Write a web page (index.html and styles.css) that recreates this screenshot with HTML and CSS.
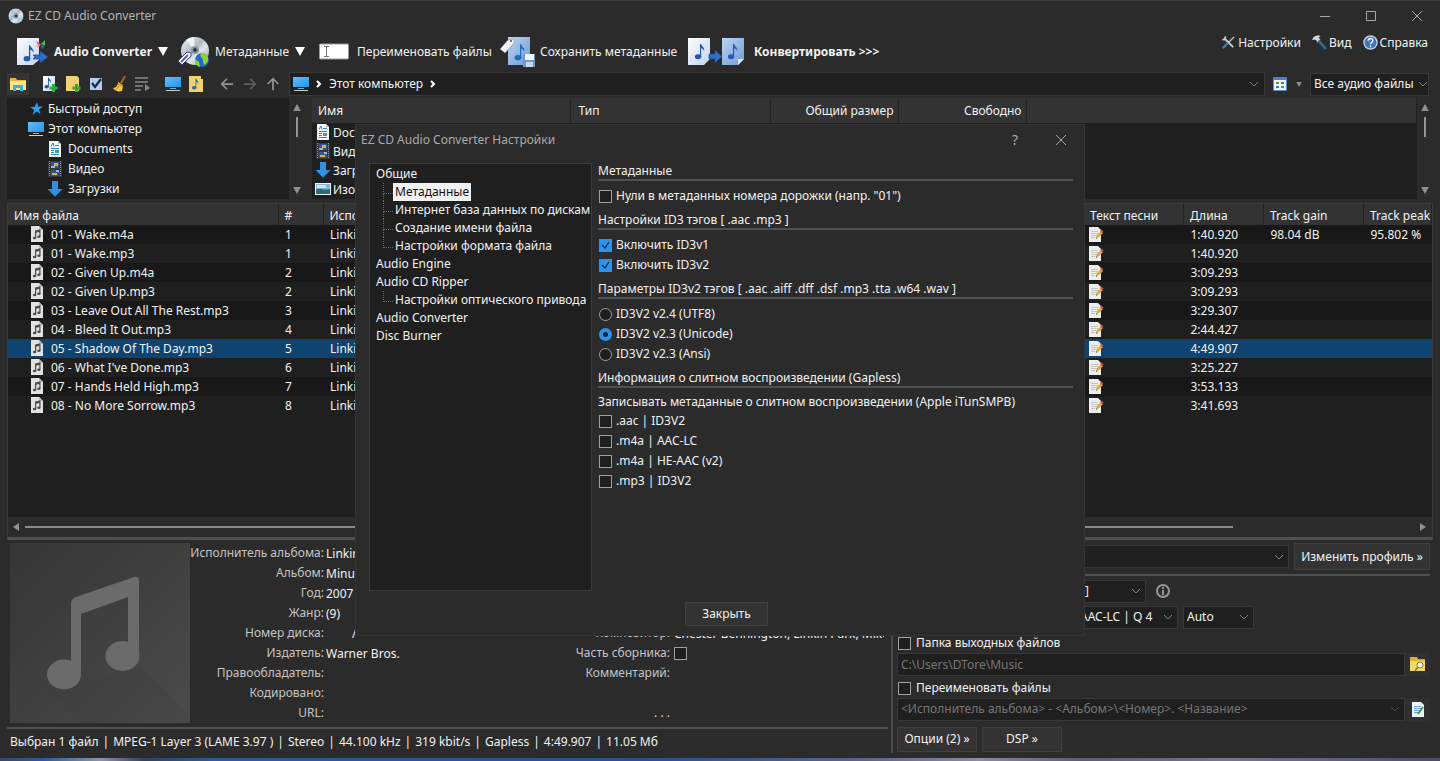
FILE: index.html
```html
<!DOCTYPE html>
<html lang="ru">
<head>
<meta charset="utf-8">
<title>EZ CD Audio Converter</title>
<link rel="stylesheet" href="styles.css">
</head>
<body>
<svg class="defs" aria-hidden="true">
  <defs>
    <linearGradient id="g-paper" x1="0" y1="0" x2="1" y2="1"><stop offset="0" stop-color="#fff"/><stop offset="1" stop-color="#c3d2ea"/></linearGradient>
    <linearGradient id="g-blue" x1="0" y1="0" x2="1" y2="1"><stop offset="0" stop-color="#bcd4f0"/><stop offset="1" stop-color="#6f9ad6"/></linearGradient>
    <linearGradient id="g-disc" x1="0" y1="0" x2="1" y2="1"><stop offset="0" stop-color="#f4f6f8"/><stop offset=".45" stop-color="#aeb8c0"/><stop offset=".6" stop-color="#e2e8ec"/><stop offset="1" stop-color="#8f9aa4"/></linearGradient>
    <linearGradient id="g-screen" x1="0" y1="0" x2="1" y2="1"><stop offset="0" stop-color="#5cc0fa"/><stop offset="1" stop-color="#2695ea"/></linearGradient>
    <linearGradient id="g-cover" x1="0" y1="0" x2="1" y2="1"><stop offset="0" stop-color="#353535"/><stop offset="1" stop-color="#4b4b4b"/></linearGradient>
  </defs>
  <symbol id="note" viewBox="0 0 10 16"><ellipse cx="3.2" cy="13" rx="3" ry="2.3"/><path d="M5 13V1h1.1c.2 2.200 3.700 3 2.700 7-.3-2-1.500-2.700-2.700-3v8z"/></symbol>
  <symbol id="pc" viewBox="0 0 16 16"><path fill="url(#g-screen)" d="M0 1h16v10H0z"/><path fill="#8fa9bb" d="M5 12h6v1H5z"/><path fill="#c4ced6" d="M1 14h14v1H1z"/></symbol>
  <symbol id="doc" viewBox="0 0 16 16"><path fill="#f5f5f5" d="M2 0h9l3 3v13H2z"/><path fill="#b9c0c5" d="M11 0v3h3z"/><path fill="none" stroke="#268fd6" d="M4 5.500 6 2l1 3.500M8 4.500h4M4 7.500h8M4 9.500h3M4 11.500h3M4 13.500h8"/><path fill="#4a9b8a" d="M8 9h4v3H8z"/></symbol>
  <symbol id="video" viewBox="0 0 16 16"><path fill="#34373c" d="M1 0h14v16H1z"/><path stroke="#8f9298" stroke-dasharray="1 1" d="M2.500 0v16M13.500 0v16"/><path fill="#35558f" d="M4 1h8v6H4zM4 9h8v6H4z"/><path fill="#d9b53e" d="M7 2h4v3H7zM5 12h5v2H5z"/><path fill="#9cb6e8" d="M4 5h4v2H4zM9 9h3v2H9z"/></symbol>
  <symbol id="down" viewBox="0 0 16 16"><path fill="#318fe2" d="M5 0h6v8h4.500L8 15.800.5 8H5z"/></symbol>
  <symbol id="image" viewBox="0 0 16 16"><path fill="#f3f3f3" d="M0 2h16v12H0z"/><path fill="#7fb6dd" d="M1 3h14v10H1z"/><path fill="#d4e8f2" d="M2 4h9v3H2z"/><path fill="#2d6a77" d="M1 9c4-3 7 1 14-1v5H1z"/></symbol>
  <symbol id="song" viewBox="0 0 14 16"><path fill="#e2e2e2" d="M1 0h8l4 4v12H1z"/><path fill="#bdbdbd" d="M9 0v4h4z"/><path fill="#4c4c4c" d="M5 4.500l5.500-1.300v7.300H9.300V6L6.200 6.800V12H5z"/><ellipse cx="4.600" cy="12" rx="1.700" ry="1.300" fill="#4c4c4c"/><ellipse cx="8.900" cy="10.700" rx="1.700" ry="1.300" fill="#4c4c4c"/></symbol>
  <symbol id="lyric" viewBox="0 0 16 16"><path fill="#ededed" d="M1 1h9l3 3v12H1z"/><path stroke="#c4c4c4" d="M3 5.500h7M3 7.500h7M3 9.500h6M3 11.500h4"/><path fill="#e4a72f" d="m8 12 1-3 4-4 2 2-4 4z"/><path fill="#d8484a" d="m12 5 1.500-1.500 2 2L14 7z"/><path fill="#555" d="m8 13 .5-2 1 1z"/></symbol>
  <symbol id="caret" viewBox="0 0 10 9"><path fill="currentColor" d="M0 0h10L5 9z"/></symbol>
</svg>

<div class="window">
  <header class="titlebar">
    <svg class="app-icon" viewBox="0 0 16 16"><circle cx="8" cy="8" r="7.500" fill="url(#g-disc)"/><path fill="#a8cce4" d="M8 8 2 3.500A7.500 7.500 0 0 1 6 .8zM8 8l6.500 3.500a7.500 7.500 0 0 1-3 3z"/><circle cx="8" cy="8" r="2.400" fill="#75818c"/><circle cx="8" cy="8" r="1" fill="#222"/></svg>
    <h1 class="title">EZ CD Audio Converter</h1>
    <div class="window-buttons">
      <button aria-label="Свернуть"><svg viewBox="0 0 12 12"><path d="M1 6.500h10"/></svg></button>
      <button aria-label="Развернуть"><svg viewBox="0 0 12 12"><path d="M1.500 1.500h9v9h-9z"/></svg></button>
      <button aria-label="Закрыть окно"><svg viewBox="0 0 12 12"><path d="m1 1 10 10M11 1 1 11"/></svg></button>
    </div>
  </header>

  <nav class="toolbar">
    <button class="tool tool-mode"><svg class="icon32" viewBox="0 0 32 32"><path fill="url(#g-paper)" d="M1 2h22v22l-6 5H1z"/><use href="#note" x="7" y="8" width="12" height="18" fill="#2459a8"/><path fill="#dc4b8c" d="m20 5 5 3-2 3z"/><path fill="#54b948" d="m25 8 4-4v6z"/><path fill="#f2c12e" d="m24 9-3 3-1-3z"/><path fill="#4478dd" d="m25 9 3 2-2 2z"/><path fill="#2f6ec4" stroke="#194a8e" stroke-width=".7" d="M17 19h7v-4l8 6-8 6v-4h-7c2-1 2-3 0-4z"/></svg><b>Audio Converter</b><svg class="caret"><use href="#caret"/></svg></button>
    <button class="tool tool-meta"><svg class="icon32" viewBox="0 0 32 32"><circle cx="18" cy="15" r="14" fill="url(#g-disc)"/><path fill="#eef3f6" d="m18 15-9-11a14 14 0 0 1 8-3z"/><circle cx="18" cy="14" r="4" fill="#8b959e"/><circle cx="18" cy="14" r="1.800" fill="#222"/><path fill="#f8f8ff" stroke="#36407e" d="m1 25 9-9 4 1v3l-9 9z"/><path stroke="#5c62a8" stroke-width="2" d="m4 26 7-7"/><circle cx="25" cy="24" r="7" fill="#2569c9"/><path fill="#8ed32e" d="M24 17c5-1 8 4 7 8l-3 4c-3-2-1-5-3-7s-2-3-1-5zM18 23l4 3 1 5c-4-1-5-4-5-8z"/></svg><span>Метаданные</span><svg class="caret"><use href="#caret"/></svg></button>
    <button class="tool tool-rename"><svg class="icon-rename" viewBox="0 0 30 17"><rect x=".5" y="1" width="29" height="15" rx="1" fill="#fff" stroke="#999"/><path stroke="#777" fill="none" d="M5 3.500h5M7.500 3.500v10M5 13.500h5"/></svg><span>Переименовать файлы</span></button>
    <button class="tool tool-save"><svg class="icon-save" viewBox="0 0 36 32"><path fill="url(#g-blue)" d="M8 1h22v28H8z"/><use href="#note" x="14" y="7" width="12" height="18" fill="#1b6fb4"/><path fill="#f4f4fa" stroke="#777d99" stroke-width=".5" d="m0 13 8-9 6-1v4l-9 10z"/><circle cx="11" cy="5" r="1" fill="#555"/><path fill="#7796c0" d="M23 18h12v13H23z"/><path fill="#f2f5f9" d="M25 18h9v6h-9z"/><path fill="#cbd7e6" d="M26 26h7v5h-7z"/></svg><span>Сохранить метаданные</span></button>
    <button class="tool tool-convert"><svg class="icon-convert" viewBox="0 0 58 32"><path fill="url(#g-paper)" d="M1 2h22v21l-6 6H1z"/><path fill="url(#g-blue)" d="M35 2h22v21l-6 6H35z"/><path fill="#dce7f6" d="M51 29v-6h6z"/><use href="#note" x="7" y="7" width="12" height="17" fill="#2459a8"/><use href="#note" x="40" y="7" width="12" height="17" fill="#245cb2"/><path fill="#2f6ec4" stroke="#194a8e" stroke-width=".6" d="M22 18h6v-4l7 6.500-7 6.500v-4h-6z"/></svg><b>Конвертировать &gt;&gt;&gt;</b></button>
    <div class="toolbar-right">
      <button class="mini"><svg viewBox="0 0 16 16"><path fill="none" stroke="#c9ced2" stroke-width="2" d="m4 4 9 9M1.500 4.500c2 1 3.500 0 3-3"/><path stroke="#bfc4c8" stroke-width="1.500" d="m14 2-6 6"/><path stroke="#2f80b8" stroke-width="2.500" d="m2 14 5-5"/></svg>Настройки</button>
      <button class="mini"><svg viewBox="0 0 16 16"><path fill="#d7dadc" d="M0 5C2 1 5 0 9 1L7 3l2 2-3 3-2-3z"/><path stroke="#2e6a91" stroke-width="3" d="m7 6 8 9"/></svg>Вид</button>
      <button class="mini"><svg viewBox="0 0 16 16"><circle cx="8" cy="8" r="7" fill="#3f72c0" stroke="#b9cee9" stroke-width="1.500"/><path fill="none" stroke="#fff" stroke-width="1.500" d="M5.500 6.200C5.500 3 10.500 3 10.500 6c0 1.700-2.500 1.700-2.500 3.700M8 11v2"/></svg>Справка</button>
    </div>
  </nav>

  <div class="addressbar">
    <div class="quick-tools">
      <button class="is-active" aria-label="Папки"><svg viewBox="0 0 16 16"><path fill="#e8b83c" d="M0 2h6l1 2h9v10H0z"/><path fill="#ffe28a" d="M0 5h16v9H0z"/><path fill="#34b6e8" d="M3 15V9h10v6h-3v-3H6v3z"/></svg></button>
      <button aria-label="Добавить файлы"><svg viewBox="0 0 16 16"><path fill="url(#g-paper)" d="M1 0h12v15H1z"/><use href="#note" x="2" y="1" width="8" height="12" fill="#205795"/><path stroke="#22b43c" stroke-width="3" d="M11.500 8v8M7.500 12h8"/></svg></button>
      <button aria-label="Добавить папку"><svg viewBox="0 0 16 16"><path fill="#f1d273" d="M1 0h11l2 2v13H1z"/><path stroke="#38a82f" stroke-width="3" d="M11.500 8v8M7.500 12h8"/></svg></button>
      <button aria-label="Отметить"><svg viewBox="0 0 16 16"><path fill="#b5cceb" d="M2 2h12v12H2z"/><path fill="none" stroke="#102a4c" stroke-width="2.200" d="m4 7 3 4 6-8"/></svg></button>
      <button aria-label="Очистить"><svg viewBox="0 0 16 16"><path stroke="#9a6b32" stroke-width="2" d="m14 0-4 7"/><path fill="#f6c83c" d="M7 6l5 3-1 6c-4 1-7 0-9-3 3 0 5-3 5-6z"/><path fill="none" stroke="#b67f20" d="m7 8 5 2M5 14l3-4"/></svg></button>
      <button aria-label="Список"><svg viewBox="0 0 16 16"><path stroke="#8a8a8a" stroke-width="1.500" d="M1 2h13M1 6h13M1 10h8M1 14h6"/><path fill="#8a8a8a" d="m11 8 5 4-5 3z"/></svg></button>
      <button class="gap-before" aria-label="Компьютер"><svg viewBox="0 0 16 16"><use href="#pc" width="16" height="16"/></svg></button>
      <button aria-label="Музыка"><svg viewBox="0 0 16 16"><path fill="#f6d26b" d="M1 0h12v3h2v13H1z"/><use href="#note" x="3" y="2" width="9" height="12" fill="#1f6ab4"/></svg></button>
      <button class="gap-before" aria-label="Назад"><svg class="arrow" viewBox="0 0 16 16"><path d="M15 8H2m6-6L2 8l6 6"/></svg></button>
      <button aria-label="Вперёд"><svg class="arrow dim" viewBox="0 0 16 16"><path d="M1 8h13M8 2l6 6-6 6"/></svg></button>
      <button aria-label="Вверх"><svg class="arrow" viewBox="0 0 16 16"><path d="M8 15V2M2 8l6-6 6 6"/></svg></button>
    </div>
    <div class="path">
      <svg class="icon16"><use href="#pc"/></svg>
      <svg class="sep" viewBox="0 0 6 8"><path d="m1 1 3 3-3 3"/></svg>
      <a href="#pc-root">Этот компьютер</a>
      <svg class="sep" viewBox="0 0 6 8"><path d="m1 1 3 3-3 3"/></svg>
      <svg class="chev" viewBox="0 0 10 6"><path d="m1 1 4 4 4-4"/></svg>
    </div>
    <button class="view-button" aria-label="Вид списка"><svg class="icon-view" viewBox="0 0 14 14"><path fill="#edf3f8" stroke="#5c8fd1" d="M.5.500h13v13H.5z"/><path fill="#4a83d0" d="M0 0h14v3H0z"/><path fill="#5a9e3e" d="M3 5h3v2H3zM8 9h3v2H8z"/><path fill="#4a79a8" d="M8 5h3v2H8zM3 9h3v2H3z"/></svg><svg class="small-caret"><use href="#caret"/></svg></button>
    <select class="box filter" aria-label="Фильтр файлов"><option>Все аудио файлы</option></select>
  </div>

  <section class="browser">
    <ul class="folders">
      <li><svg class="icon16" viewBox="0 0 16 16"><path fill="#2a9df0" d="m9 1 1.200 4.500H15l-4 3L12.500 13 8.500 10.500 4.500 14l1.700-5L2 6h4.500z"/></svg>Быстрый доступ</li>
      <li><svg class="icon16"><use href="#pc"/></svg>Этот компьютер</li>
      <li class="nested"><svg class="icon16"><use href="#doc"/></svg>Documents</li>
      <li class="nested"><svg class="icon16"><use href="#video"/></svg>Видео</li>
      <li class="nested"><svg class="icon16"><use href="#down"/></svg>Загрузки</li>
    </ul>
    <div class="vscroll"><svg class="tri"><use href="#caret" class="flip"/></svg><i></i><svg class="tri"><use href="#caret"/></svg></div>
    <div class="listing">
      <table class="places">
        <colgroup><col class="w-name"><col class="w-type"><col class="w-size"><col class="w-free"><col></colgroup>
        <thead><tr><th>Имя</th><th>Тип</th><th class="num">Общий размер</th><th class="num">Свободно</th><th></th></tr></thead>
        <tbody>
          <tr><td colspan="5"><svg class="icon16"><use href="#doc"/></svg>Documents</td></tr>
          <tr><td colspan="5"><svg class="icon16"><use href="#video"/></svg>Видео</td></tr>
          <tr><td colspan="5"><svg class="icon16"><use href="#down"/></svg>Загрузки</td></tr>
          <tr><td colspan="5"><svg class="icon16"><use href="#image"/></svg>Изображения</td></tr>
        </tbody>
      </table>
    </div>
    <div class="vscroll"><svg class="tri"><use href="#caret" class="flip"/></svg><i></i><svg class="tri"><use href="#caret"/></svg></div>
  </section>

  <section class="tracks-panel">
    <table class="tracks">
      <colgroup><col class="c-file"><col class="c-no"><col><col class="c-lyric"><col class="c-len"><col class="c-gain"><col class="c-peak"></colgroup>
      <thead><tr><th>Имя файла</th><th>#</th><th>Исполнитель</th><th>Текст песни</th><th>Длина</th><th>Track gain</th><th>Track peak</th></tr></thead>
      <tbody>
        <tr><td><svg class="song"><use href="#song"/></svg>01 - Wake.m4a</td><td>1</td><td>Linkin Park</td><td><svg class="icon16"><use href="#lyric"/></svg></td><td>1:40.920</td><td>98.04 dB</td><td>95.802 %</td></tr>
        <tr><td><svg class="song"><use href="#song"/></svg>01 - Wake.mp3</td><td>1</td><td>Linkin Park</td><td><svg class="icon16"><use href="#lyric"/></svg></td><td>1:40.920</td><td></td><td></td></tr>
        <tr><td><svg class="song"><use href="#song"/></svg>02 - Given Up.m4a</td><td>2</td><td>Linkin Park</td><td><svg class="icon16"><use href="#lyric"/></svg></td><td>3:09.293</td><td></td><td></td></tr>
        <tr><td><svg class="song"><use href="#song"/></svg>02 - Given Up.mp3</td><td>2</td><td>Linkin Park</td><td><svg class="icon16"><use href="#lyric"/></svg></td><td>3:09.293</td><td></td><td></td></tr>
        <tr><td><svg class="song"><use href="#song"/></svg>03 - Leave Out All The Rest.mp3</td><td>3</td><td>Linkin Park</td><td><svg class="icon16"><use href="#lyric"/></svg></td><td>3:29.307</td><td></td><td></td></tr>
        <tr><td><svg class="song"><use href="#song"/></svg>04 - Bleed It Out.mp3</td><td>4</td><td>Linkin Park</td><td><svg class="icon16"><use href="#lyric"/></svg></td><td>2:44.427</td><td></td><td></td></tr>
        <tr class="selected"><td><svg class="song"><use href="#song"/></svg>05 - Shadow Of The Day.mp3</td><td>5</td><td>Linkin Park</td><td><svg class="icon16"><use href="#lyric"/></svg></td><td>4:49.907</td><td></td><td></td></tr>
        <tr><td><svg class="song"><use href="#song"/></svg>06 - What I've Done.mp3</td><td>6</td><td>Linkin Park</td><td><svg class="icon16"><use href="#lyric"/></svg></td><td>3:25.227</td><td></td><td></td></tr>
        <tr><td><svg class="song"><use href="#song"/></svg>07 - Hands Held High.mp3</td><td>7</td><td>Linkin Park</td><td><svg class="icon16"><use href="#lyric"/></svg></td><td>3:53.133</td><td></td><td></td></tr>
        <tr><td><svg class="song"><use href="#song"/></svg>08 - No More Sorrow.mp3</td><td>8</td><td>Linkin Park</td><td><svg class="icon16"><use href="#lyric"/></svg></td><td>3:41.693</td><td></td><td></td></tr>
      </tbody>
    </table>
    <div class="hscroll"><svg viewBox="0 0 6 8"><path d="M6 0v8L0 4z"/></svg><div class="rail"><i></i></div><svg viewBox="0 0 6 8"><path d="M0 0v8l6-4z"/></svg></div>
  </section>

  <section class="bottom">
    <div class="info">
      <div class="meta">
        <svg class="cover" viewBox="0 0 180 180"><path fill="url(#g-cover)" d="M0 0h180v180H0z"/><path fill="#2f2f2f" opacity=".1" d="m132 125 48 48v7H70l-32-32z"/><path fill="#6b6b6b" d="M61 60c0-3 2-5 5-6l58-20c3-1 5 0 5 3v77H118V54L71 71v62H61z"/><ellipse cx="54" cy="131.500" rx="17" ry="15" fill="#6b6b6b"/><ellipse cx="112.500" cy="113" rx="17" ry="15" fill="#6b6b6b"/></svg>
        <div class="fields">
          <label for="f-artist">Исполнитель альбома:</label><input id="f-artist" value="Linkin Park">
          <label for="f-album">Альбом:</label><input id="f-album" value="Minutes to Midnight">
          <label for="f-year">Год:</label><input id="f-year" value="2007">
          <label for="f-genre">Жанр:</label><input id="f-genre" value="(9)">
          <label for="f-disc">Номер диска:</label><input id="f-disc" value="/">
          <label for="f-label">Издатель:</label><input id="f-label" value="Warner Bros.">
          <label for="f-copy">Правообладатель:</label><input id="f-copy">
          <label for="f-enc">Кодировано:</label><input id="f-enc">
          <label for="f-url">URL:</label><input id="f-url">
        </div>
        <div class="fields fields-more">
          <label for="f-comp">Композитор:</label><input id="f-comp" value="Chester Bennington, Linkin Park, Mike Shinoda">
          <label for="f-part">Часть сборника:</label><input id="f-part" type="checkbox">
          <label for="f-note">Комментарий:</label><input id="f-note">
          <span></span><span></span>
          <button class="more">. . .</button>
        </div>
      </div>
      <footer class="status"><span>Выбран 1 файл</span><span>MPEG-1 Layer 3 (LAME 3.97 )</span><span>Stereo</span><span>44.100 kHz</span><span>319 kbit/s</span><span>Gapless</span><span>4:49.907</span><span>11.05 Мб</span></footer>
    </div>

    <form class="output">
      <div class="line profile"><select class="box grow" aria-label="Профиль"><option></option></select><button type="button" class="btn">Изменить профиль »</button></div>
      <div class="line"><select class="box format" aria-label="Формат"><option>]</option></select><svg class="info-icon" viewBox="0 0 14 14"><circle cx="7" cy="7" r="6"/><path d="M7 3v2M7 6v5"/></svg></div>
      <div class="line quality"><select class="box codec" aria-label="Кодек"><option>AAC-LC | Q 4</option></select><select class="box auto" aria-label="Каналы"><option>Auto</option></select></div>
      <label class="check"><input type="checkbox">Папка выходных файлов</label>
      <div class="line"><input class="box grow muted" aria-label="Папка" value="C:\Users\DTore\Music"><button type="button" class="side" aria-label="Обзор"><svg viewBox="0 0 16 16"><path fill="#e2b02f" d="M0 1h7l1 2h7v12H0z"/><path fill="#f5d669" d="M0 5h15v10H0z"/><circle cx="10" cy="9" r="3" fill="#f7f3dc" stroke="#8a7a4a"/><path stroke="#8a7a4a" stroke-width="1.500" d="m8 11-3 4"/></svg></button></div>
      <label class="check"><input type="checkbox">Переименовать файлы</label>
      <div class="line"><select class="box grow muted dim-chev" aria-label="Шаблон имени"><option>&lt;Исполнитель альбома&gt; - &lt;Альбом&gt;\&lt;Номер&gt;. &lt;Название&gt;</option></select><button type="button" class="side" aria-label="Изменить шаблон"><svg viewBox="0 0 16 16"><path fill="#eef5fc" d="M2 1h9l3 3v12H2z"/><path stroke="#6aa0d6" d="M4 5.500h7M4 7.500h7M4 9.500h6M4 11.500h4"/><path stroke="#4a9c35" stroke-width="2" d="m8 13 5-7"/></svg></button></div>
      <div class="line actions"><button type="button" class="btn">Опции (2) »</button><button type="button" class="btn">DSP »</button></div>
    </form>
  </section>
  <div class="desktop-edge"></div>

  <div class="dialog" role="dialog" aria-labelledby="dlg-title">
    <header class="dialog-head"><h2 id="dlg-title">EZ CD Audio Converter Настройки</h2><button aria-label="Помощь">?</button><button aria-label="Закрыть настройки"><svg viewBox="0 0 12 12"><path d="m1 1 10 10M11 1 1 11"/></svg></button></header>
    <div class="dialog-body">
      <ul class="tree">
        <li>Общие
          <ul><li><span class="current">Метаданные</span></li><li><span>Интернет база данных по дискам</span></li><li><span>Создание имени файла</span></li><li><span>Настройки формата файла</span></li></ul>
        </li>
        <li>Audio Engine</li>
        <li>Audio CD Ripper
          <ul><li><span>Настройки оптического привода</span></li></ul>
        </li>
        <li>Audio Converter</li>
        <li>Disc Burner</li>
      </ul>
      <div class="options">
        <h3>Метаданные</h3>
        <label class="check"><input type="checkbox">Нули в метаданных номера дорожки (напр. "01")</label>
        <h3>Настройки ID3 тэгов [ .aac .mp3 ]</h3>
        <label class="check"><input type="checkbox" checked>Включить ID3v1</label>
        <label class="check"><input type="checkbox" checked>Включить ID3v2</label>
        <h3>Параметры ID3v2 тэгов [ .aac .aiff .dff .dsf .mp3 .tta .w64 .wav ]</h3>
        <label class="check"><input type="radio" name="id3">ID3V2 v2.4 (UTF8)</label>
        <label class="check"><input type="radio" name="id3" checked>ID3V2 v2.3 (Unicode)</label>
        <label class="check"><input type="radio" name="id3">ID3V2 v2.3 (Ansi)</label>
        <h3>Информация о слитном воспроизведении (Gapless)</h3>
        <p>Записывать метаданные о слитном воспроизведении (Apple iTunSMPB)</p>
        <label class="check"><input type="checkbox">.aac | ID3V2</label>
        <label class="check"><input type="checkbox">.m4a | AAC-LC</label>
        <label class="check"><input type="checkbox">.m4a | HE-AAC (v2)</label>
        <label class="check"><input type="checkbox">.mp3 | ID3V2</label>
      </div>
    </div>
    <div class="dialog-foot"><button class="btn">Закрыть</button></div>
  </div>
</div>
</body>
</html>
```
FILE: styles.css
```css
* { box-sizing: border-box; }
body {
  margin: 0;
  background: #2b2b2b;
  color: #f2f2f2;
  font: 12px/18px "Noto Sans", "Open Sans", sans-serif;
}
button, input, select { font: inherit; color: inherit; margin: 0; }
button { border: 0; padding: 0; background: none; }
ul { list-style: none; margin: 0; padding: 0; }
h1, h2, h3, p { margin: 0; font: inherit; }
svg { flex: none; display: block; }
table { border-collapse: collapse; table-layout: fixed; width: 100%; }
th, td { padding: 0; font-weight: normal; text-align: left; white-space: nowrap; overflow: hidden; }
.defs { position: absolute; width: 0; height: 0; }
.icon16 { width: 16px; height: 16px; }

.window {
  position: relative;
  display: flex;
  flex-direction: column;
  min-height: 100vh;
  border-top: 1px solid #3d3d3d;
}

/* Title bar */
.titlebar { display: flex; align-items: center; height: 30px; padding-left: 8px; gap: 4px; }
.app-icon { width: 16px; height: 16px; }
.title { color: #b4b4b4; flex: 1; }
.window-buttons { display: flex; }
.window-buttons button { width: 46px; height: 30px; display: grid; place-items: center; }
.window-buttons svg, .dialog-head svg { width: 12px; height: 12px; fill: none; stroke: #a8a8a8; }

/* Main toolbar */
.toolbar { display: flex; height: 41px; padding: 0 12px 0 16px; }
.tool { display: flex; align-items: center; gap: 6px; white-space: nowrap; flex: none; }
.tool-mode { width: 161px; }
.tool-meta { width: 142px; }
.tool-rename { width: 181px; gap: 8px; }
.tool-save { width: 187px; gap: 4px; }
.tool-convert { gap: 9px; }
.icon32 { width: 32px; height: 32px; }
.icon-rename { width: 30px; height: 17px; }
.icon-save { width: 36px; height: 32px; }
.icon-convert { width: 58px; height: 32px; }
.caret { width: 10px; height: 9px; color: #fff; }
.toolbar-right { display: flex; gap: 11px; margin-left: auto; align-items: flex-start; }
.mini { display: flex; align-items: center; gap: 2px; height: 23px; }
.mini svg { width: 15px; height: 15px; }

/* Address row */
.addressbar { display: flex; align-items: center; height: 24px; padding: 0 11px 0 7px; }
.quick-tools { display: flex; gap: 1px; width: 282px; flex: none; }
.quick-tools button { width: 22px; height: 22px; display: grid; place-items: center; }
.quick-tools .is-active { background: #353535; margin-right: 9px; }
.quick-tools .gap-before { margin-left: 8px; }
.quick-tools svg { width: 16px; height: 16px; }
.quick-tools .arrow { width: 14px; height: 14px; fill: none; stroke: #929292; stroke-width: 2; }
.quick-tools .dim { stroke: #5e5e5e; }
.path {
  flex: 1;
  display: flex;
  align-items: center;
  gap: 7px;
  height: 24px;
  padding: 0 5px 0 3px;
  background: #1f1f1f;
  border: 1px solid #383838;
}
.path a { color: inherit; text-decoration: none; }
.sep { width: 6px; height: 8px; fill: none; stroke: #fff; stroke-width: 2; }
.chev { width: 10px; height: 6px; fill: none; stroke: #828282; margin-left: auto; }
.view-button { display: flex; align-items: center; gap: 9px; padding: 0 8px 0 8px; }
.icon-view { width: 14px; height: 14px; }
.small-caret { width: 6px; height: 5px; color: #8c8c8c; }
.filter { width: 119px; }

.box {
  height: 23px;
  padding: 0 3px;
  background: #1f1f1f;
  border: 1px solid #383838;
  border-radius: 0;
  min-width: 0;
}
select.box {
  appearance: none;
  background: #1f1f1f url("data:image/svg+xml,%3Csvg xmlns='http://www.w3.org/2000/svg' width='10' height='6'%3E%3Cpath d='m1 1 4 4 4-4' fill='none' stroke='%23828282'/%3E%3C/svg%3E") no-repeat right 4px center;
}
select.filter { background-position-x: right; }
select.dim-chev {
  background-image: url("data:image/svg+xml,%3Csvg xmlns='http://www.w3.org/2000/svg' width='10' height='6'%3E%3Cpath d='m1 1 4 4 4-4' fill='none' stroke='%23484848'/%3E%3C/svg%3E");
}
.grow { flex: 1; }
.muted { color: #767676; }

/* Folder browser */
.browser { display: flex; height: 101px; margin: 2px 7px 0; }
.folders { width: 282px; flex: none; background: #1f1f1f; padding: 1px 0 0 21px; }
.folders li { display: flex; align-items: center; gap: 4px; height: 20px; }
.folders .nested { padding-left: 19px; gap: 5px; }
.vscroll { width: 16px; flex: none; display: flex; flex-direction: column; align-items: center; padding: 6px 0 5px; }
.vscroll i { width: 2px; height: 20px; background: #969696; margin: 6px 0 auto; }
.tri { width: 8px; height: 7px; color: #909090; }
.flip { transform: rotate(180deg); transform-origin: center; }
.listing { flex: 1; min-width: 0; overflow: hidden; background: #1f1f1f; margin-left: 7px; }
.w-name { width: 258px; }
.w-type { width: 200px; }
.w-size, .w-free { width: 128px; }
.places th { height: 25px; padding: 0 6px; background: #333; border-right: 1px solid #232323; }
.places th + th { padding-left: 8px; }
.places th.num { text-align: right; padding-right: 4px; }
.places td { height: 19px; padding-left: 3px; line-height: 19px; }
.places td svg, .tracks td svg { display: inline-block; vertical-align: top; margin-top: 1px; }
.places td svg { margin-right: 2px; }

/* Tracks */
.tracks-panel {
  flex: 1;
  display: flex;
  flex-direction: column;
  margin: 4px 7px 0;
  background: #1f1f1f;
  border: 1px solid #3c3c3c;
  border-bottom: 3px solid #505050;
}
.c-file { width: 270px; }
.c-no { width: 45px; }
.c-lyric { width: 100px; }
.c-len { width: 80px; }
.c-gain { width: 100px; }
.c-peak { width: 68px; }
.tracks th { height: 21px; padding: 2px 0 0 6px; background: #333; border-right: 1px solid #232323; }
.tracks td { height: 19px; line-height: 19px; padding-left: 7px; }
.tracks td:first-child { padding-left: 22px; }
.tracks td:nth-child(4) { padding-left: 4px; }
.tracks tbody tr:nth-child(odd) { background: #181818; }
.tracks tbody tr.selected { background: #0f4471; }
.song { width: 14px; height: 16px; margin-right: 7px; }
.hscroll { display: flex; align-items: center; gap: 6px; height: 20px; margin-top: auto; padding: 0 6px 0 5px; background: #2b2b2b; }
.hscroll svg { width: 6px; height: 8px; fill: #929292; }
.rail { flex: 1; }
.rail i { display: block; width: 87%; height: 2px; background: #8a8a8a; }

/* Bottom area */
.bottom { display: flex; height: 218px; margin: 0 10px 0 7px; gap: 4px; }
.info { flex: 1; min-width: 0; display: flex; flex-direction: column; border-right: 2px solid #4a4a4a; margin-bottom: 5px; }
.meta { display: flex; flex: 1; padding: 3px 4px 0 3px; border-bottom: 2px solid #505050; margin-right: 3px; }
.cover { width: 180px; height: 180px; }
.fields {
  display: grid;
  grid-template-columns: 134px 205px;
  grid-auto-rows: 20px;
  column-gap: 2px;
  flex: none;
}
.fields label { color: #c4c4c4; text-align: right; line-height: 20px; white-space: nowrap; }
.fields input:not([type="checkbox"]) { border: 0; background: none; padding: 0; height: 20px; min-width: 0; width: 100%; }
.fields input#f-disc { padding-left: 26px; }
.fields-more { grid-template-columns: 139px 1fr; column-gap: 4px; flex: 1; min-width: 0; padding-top: 80px; }
.fields-more [type="checkbox"] { align-self: center; }
.more { text-align: right; color: #ddd; }
.status { display: flex; height: 24px; align-items: center; padding: 1px 0 0 3px; white-space: nowrap; }
.status span + span::before { content: "|"; padding: 0 4px; }

.output { width: 533px; flex: none; padding-top: 3px; display: flex; flex-direction: column; }
.line { display: flex; align-items: center; gap: 5px; height: 26px; }
.profile { height: 33px; padding-bottom: 4px; border-bottom: 2px solid #505050; margin-bottom: 2px; }
.profile .btn { width: 136px; height: 27px; }
.format { width: 249px; padding-left: 187px; }
.quality { margin-bottom: 3px; }
.codec { width: 281px; padding-left: 182px; }
.auto { width: 71px; }
.info-icon { width: 14px; height: 14px; margin-left: 5px; fill: none; stroke: #969696; stroke-width: 2; }
.output > .check { height: 18px; padding-left: 1px; margin-top: 1px; }
.output > .check + .line { padding-bottom: 2px; }
.side { width: 25px; height: 23px; display: grid; place-items: center; background: #303030; margin-left: -5px; }
.side svg { width: 16px; height: 16px; }
.btn { background: #333; border: 1px solid #404040; height: 25px; white-space: nowrap; }
.actions { margin-top: 3px; }
.actions .btn { width: 80px; }

.check { display: flex; align-items: center; gap: 5px; height: 20px; white-space: nowrap; }
input[type="checkbox"], input[type="radio"] {
  appearance: none;
  width: 13px;
  height: 13px;
  flex: none;
  background: #1f1f1f;
  border: 1px solid #a0a0a0;
}
input[type="radio"] { border-radius: 50%; }
input[type="radio"]:checked { border: 4px solid #2a93ee; }
input[type="checkbox"]:checked {
  border-color: #2a93ee;
  background: #2a93ee url("data:image/svg+xml,%3Csvg xmlns='http://www.w3.org/2000/svg' width='11' height='11'%3E%3Cpath d='m2 5 3 3 4-6' fill='none' stroke='%23102a44' stroke-width='1.300'/%3E%3C/svg%3E") center no-repeat;
}

.desktop-edge {
  height: 3px;
  margin-top: auto;
  background: linear-gradient(90deg, #3d4560, #2e5b96 3%, #8d93a8 7%, #35405c 10%, #2e5b96 15%, #2c4f8c 45%, #5f6285 60%, #8c8a9c 68%, #5c5b70 75%, #777489 85%, #4b4c66);
}

/* Settings dialog */
.dialog {
  position: absolute;
  inset: 0 0 2px;
  margin: auto;
  width: 730px;
  height: 512px;
  display: flex;
  flex-direction: column;
  background: #2b2b2b;
  border: 1px solid #343434;
}
.dialog-head { display: flex; align-items: center; height: 30px; padding-left: 5px; color: #aaa; }
.dialog-head h2 { flex: 1; }
.dialog-head button { width: 46px; height: 30px; display: grid; place-items: center; font-size: 14px; }
.dialog-body { display: flex; gap: 6px; flex: 1; padding: 8px 11px 0 13px; }
.tree { width: 223px; height: 428px; flex: none; padding: 1px 0 0 6px; background: #1f1f1f; border: 1px solid #3c3c3c; white-space: nowrap; }
.tree ul { margin-left: 7px; }
.tree ul li { position: relative; height: 18px; padding-left: 10px; }
.tree ul li::before { content: ""; position: absolute; left: 0; top: 0; width: 9px; height: 10px; border: dotted #666; border-width: 0 0 1px 1px; }
.tree ul li:not(:last-child)::after { content: ""; position: absolute; left: 0; top: 10px; height: 8px; border-left: 1px dotted #666; }
.tree li span { display: inline-block; padding: 0 2px; }
.tree .current { background: #f2f2f2; color: #111; }
.options { flex: 1; min-width: 0; }
.options h3 { height: 19px; line-height: 17px; border-bottom: 2px solid #505050; margin: 5px 0; white-space: nowrap; }
.options h3:first-child { margin-top: -1px; }
.options .check { padding-left: 1px; gap: 4px; }
.options p { white-space: nowrap; }
.dialog-foot { display: flex; justify-content: center; padding: 0 0 9px 13px; }
.dialog-foot .btn { width: 83px; height: 24px; }
```
